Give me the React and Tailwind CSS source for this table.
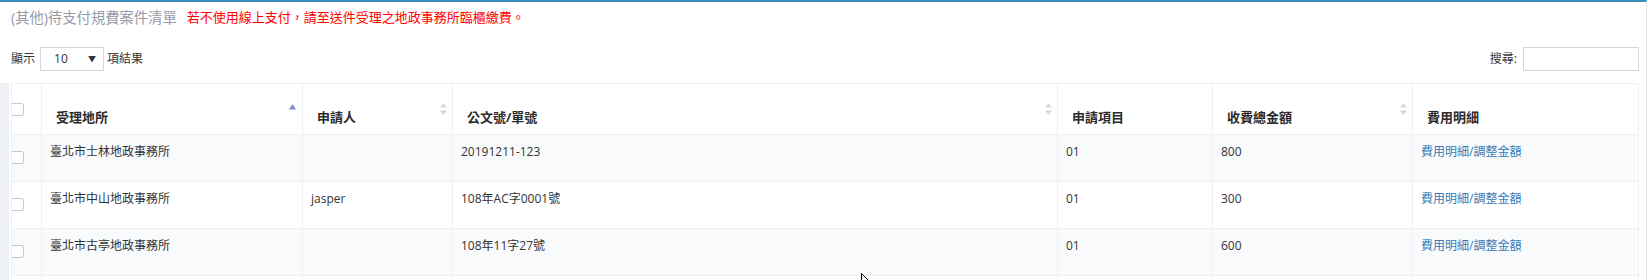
const rows = [
  { id: 1, office: "臺北市士林地政事務所", applicant: "", docNo: "20191211-123", item: "01", total: 800, link: true },
  { id: 2, office: "臺北市中山地政事務所", applicant: "jasper", docNo: "108年AC字0001號", item: "01", total: 300, link: true },
  { id: 3, office: "臺北市古亭地政事務所", applicant: "", docNo: "108年11字27號", item: "01", total: 600, link: true },
  { id: 4, office: "", applicant: "", docNo: "", item: "", total: "", link: false },
];

const SortBoth = () => (
  <svg className="absolute right-[5px] top-[19px]" width="7" height="12" viewBox="0 0 7 12">
    <path d="M3.5 0 L7 4.5 H0 Z" fill="#d9d9d9" />
    <path d="M3.5 12 L7 7.5 H0 Z" fill="#d9d9d9" />
  </svg>
);

const SortAsc = () => (
  <svg className="absolute right-[6px] top-[20px]" width="7" height="6" viewBox="0 0 7 6">
    <path d="M3.5 0 L7 5.5 H0 Z" fill="#8489d6" />
  </svg>
);

const Check = ({ top }) => (
  <div className={`${top} w-[12px] h-[13px] border border-l-0 border-[#c9c9c9] rounded-r-[3px] bg-white`} />
);

const App = () => {
  const th = "relative align-bottom text-left pl-[14px] pb-[7px] text-[13px] font-bold text-[#2b2b2b] border border-[#eef0f3]";
  const td = "align-top pl-[8px] pt-[8px] text-[12px] leading-[18px] border border-[#eef0f3]";

  return (
    <div className="relative w-[1648px] h-[280px] overflow-hidden bg-white text-[#333] font-['Open_Sans','Noto_Sans_CJK_TC',sans-serif]">
      <div className="w-[1647px] h-[280px] border-t-2 border-[#3c8dbc] border-r border-r-[#e3e7ed]">
        <div className="flex items-center h-[20px] mt-[6px] px-[11px]">
          <span className="text-[14.3px] text-[#9a9aa6]">(其他)待支付規費案件清單</span>
          <span className="ml-[10px] text-[13px] text-[#ff0000]">若不使用線上支付，請至送件受理之地政事務所臨櫃繳費。</span>
        </div>

        <div className="flex items-center justify-between h-[24px] mt-[19px] pl-[11px] pr-[7px] text-[12px]">
          <div className="flex items-center">
            <span>顯示</span>
            <div className="relative ml-[5px] w-[64px] h-[24px] border border-[#d2d6de] flex items-center pl-[13px] text-[12px]">
              10
              <span className="absolute right-[7px] top-[5px] text-[8px] text-[#333]">▼</span>
            </div>
            <span className="ml-[3px]">項結果</span>
          </div>
          <div className="flex items-center">
            <span>搜尋:</span>
            <div className="ml-[6px] w-[116px] h-[24px] border border-[#d2d6de]" />
          </div>
        </div>

        <div className="flex mt-[12px]">
          <div className="w-[9px] h-[200px] bg-[#edf0f5]" />
          <table className="ml-[2px] w-[1627px] table-fixed border-collapse border border-[#e3e6ea]">
            <colgroup>
              <col className="w-[30px]" />
              <col className="w-[261px]" />
              <col className="w-[150px]" />
              <col className="w-[605px]" />
              <col className="w-[155px]" />
              <col className="w-[200px]" />
              <col className="w-[226px]" />
            </colgroup>
            <thead>
              <tr className="h-[51px]">
                <th className="relative p-0 align-top border border-[#eef0f3]">
                  <Check top="mt-[19px]" />
                </th>
                <th className={th}>受理地所<SortAsc /></th>
                <th className={th}>申請人<SortBoth /></th>
                <th className={th}>公文號/單號<SortBoth /></th>
                <th className={th}>申請項目</th>
                <th className={th}>收費總金額<SortBoth /></th>
                <th className={th}>費用明細</th>
              </tr>
            </thead>
            <tbody>
              {rows.map((r, i) => (
                <tr key={r.id} className={`h-[47px] ${i % 2 === 0 ? "bg-[#f9fafc]" : "bg-white"}`}>
                  <td className="p-0 align-top border border-[#eef0f3]">
                    <Check top="mt-[16px]" />
                  </td>
                  <td className={td}>{r.office}</td>
                  <td className={td}>{r.applicant}</td>
                  <td className={td}>{r.docNo}</td>
                  <td className={td}>{r.item}</td>
                  <td className={td}>{r.total}</td>
                  <td className={td}>
                    {r.link && <a className="text-[#337ab7]">費用明細/調整金額</a>}
                  </td>
                </tr>
              ))}
            </tbody>
          </table>
        </div>
      </div>

      <svg className="absolute left-[861px] top-[273px]" width="10" height="14" viewBox="0 0 10 14">
        <path d="M0.5 0.5 V11 L3 8.5 L5 13 L6.5 12.3 L4.6 8 H8 Z" fill="#fff" stroke="#000" strokeWidth="1" />
      </svg>
    </div>
  );
};

export default App;
